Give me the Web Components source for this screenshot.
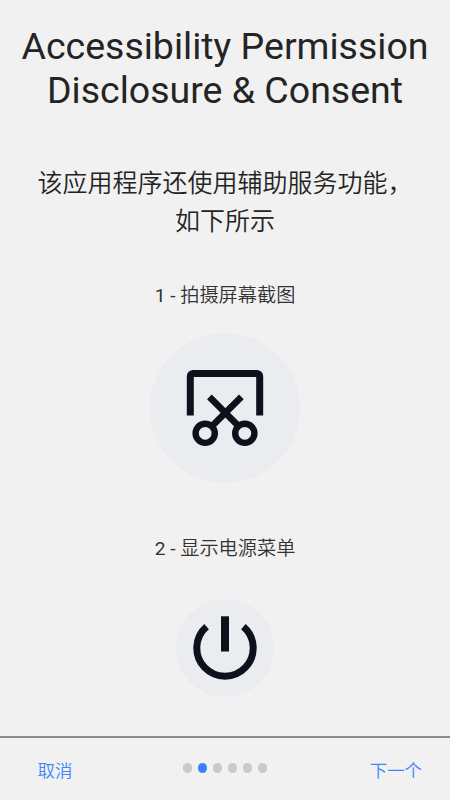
<!DOCTYPE html>
<html lang="zh-CN">
<head>
<meta charset="utf-8">
<title>Accessibility Permission</title>
<style>
html,body{margin:0;height:100%}
body{background:#f1f1f1;color:#242424;font-family:Roboto,"Noto Sans CJK SC DemiLight","Noto Sans CJK SC",sans-serif;overflow:hidden}
</style>
</head>
<body>
<consent-page>
  <page-heading slot="head">Accessibility Permission<br>Disclosure &amp; Consent</page-heading>
  <page-intro slot="head">该应用程序还使用辅助服务功能，<br>如下所示</page-intro>
  <feature-item caption="1 - 拍摄屏幕截图" style="--size:150px;--gap:23px"><screenshot-icon></screenshot-icon></feature-item>
  <feature-item caption="2 - 显示电源菜单" style="--size:98px;--gap:36px"><power-icon></power-icon></feature-item>
  <wizard-bar slot="foot" steps="6" current="2"><span slot="back">取消</span><span slot="next">下一个</span></wizard-bar>
</consent-page>
<script>
const define = (name, html, setup) => customElements.define(name, class extends HTMLElement {
  connectedCallback() {
    if (this.shadowRoot) return;
    const root = this.attachShadow({mode: 'open'});
    root.innerHTML = html;
    if (setup) setup(this, root);
  }
});
define('page-heading', `<style>
:host{display:block;padding-top:24px;text-align:center;font-size:37.5px;line-height:44px;white-space:nowrap}
</style><slot></slot>`);
define('page-intro', `<style>
:host{display:block;margin-top:53px;text-align:center;font-size:25px;line-height:38px;white-space:nowrap}
</style><slot></slot>`);
define('feature-item', `<style>
:host{display:flex;flex-direction:column;align-items:center;gap:var(--gap)}
.caption{font-size:19.2px;line-height:28px;white-space:nowrap;color:#333}
.disc{width:var(--size);height:var(--size);border-radius:50%;background:#ebecf0;display:grid;place-items:center}
</style><div class="caption"></div><div class="disc"><slot></slot></div>`,
(el, root) => root.querySelector('.caption').textContent = el.getAttribute('caption'));
define('screenshot-icon', `<style>:host{display:block;width:80px;height:80px}svg{display:block}</style>
<svg width="80" height="80" viewBox="185 368 80 80" fill="none" stroke="#0c111c">
<path stroke-width="7" d="M190.3 415.6V376.4a2.9 2.9 0 0 1 2.9-2.9h63.6a2.9 2.9 0 0 1 2.9 2.9v39.2"/>
<path stroke-width="6.6" d="M209.4 396.8 238.6 426.2M241.4 396.8 212 426.2"/>
<circle cx="205.2" cy="433.3" r="9.6" stroke-width="6.4"/><circle cx="244.8" cy="433.3" r="9.6" stroke-width="6.4"/>
</svg>`);
define('power-icon', `<style>:host{display:block;width:70px;height:70px}svg{display:block}</style>
<svg width="70" height="70" viewBox="190 613 70 70" fill="none" stroke="#0c111c">
<path stroke-width="7" d="M206.6 626.6A28.2 28.2 0 1 0 243.4 626.6"/>
<path stroke-width="8" d="M225 616.3V651.5"/>
</svg>`);
define('wizard-bar', `<style>
:host{display:grid;grid-template-columns:1fr auto 1fr;align-items:center;height:62px;border-top:2px solid #8c8c8c;padding:0 28px 0 37.5px;box-sizing:content-box;font-size:17.4px;line-height:26px;color:#3d87f8}
.next{text-align:right}
.dots{display:flex;gap:5.6px;margin-right:9.5px}
i{width:9.4px;height:9.4px;border-radius:50%;background:#cacaca}
i.on{background:#3b82fb}
.dots{padding-bottom:2px}
.label{padding-top:4px}
</style><div class="label"><slot name="back"></slot></div><div class="dots"></div><div class="label next"><slot name="next"></slot></div>`,
(el, root) => {
  const dots = root.querySelector('.dots');
  for (let n = 1; n <= +el.getAttribute('steps'); n++) {
    const dot = document.createElement('i');
    if (n === +el.getAttribute('current')) dot.className = 'on';
    dots.append(dot);
  }
});
define('consent-page', `<style>
:host{display:flex;flex-direction:column;height:800px}
main{flex:1;display:flex;flex-direction:column;gap:52px;padding-top:41px}
</style><slot name="head"></slot><main><slot></slot></main><slot name="foot"></slot>`);
</script>
</body>
</html>
